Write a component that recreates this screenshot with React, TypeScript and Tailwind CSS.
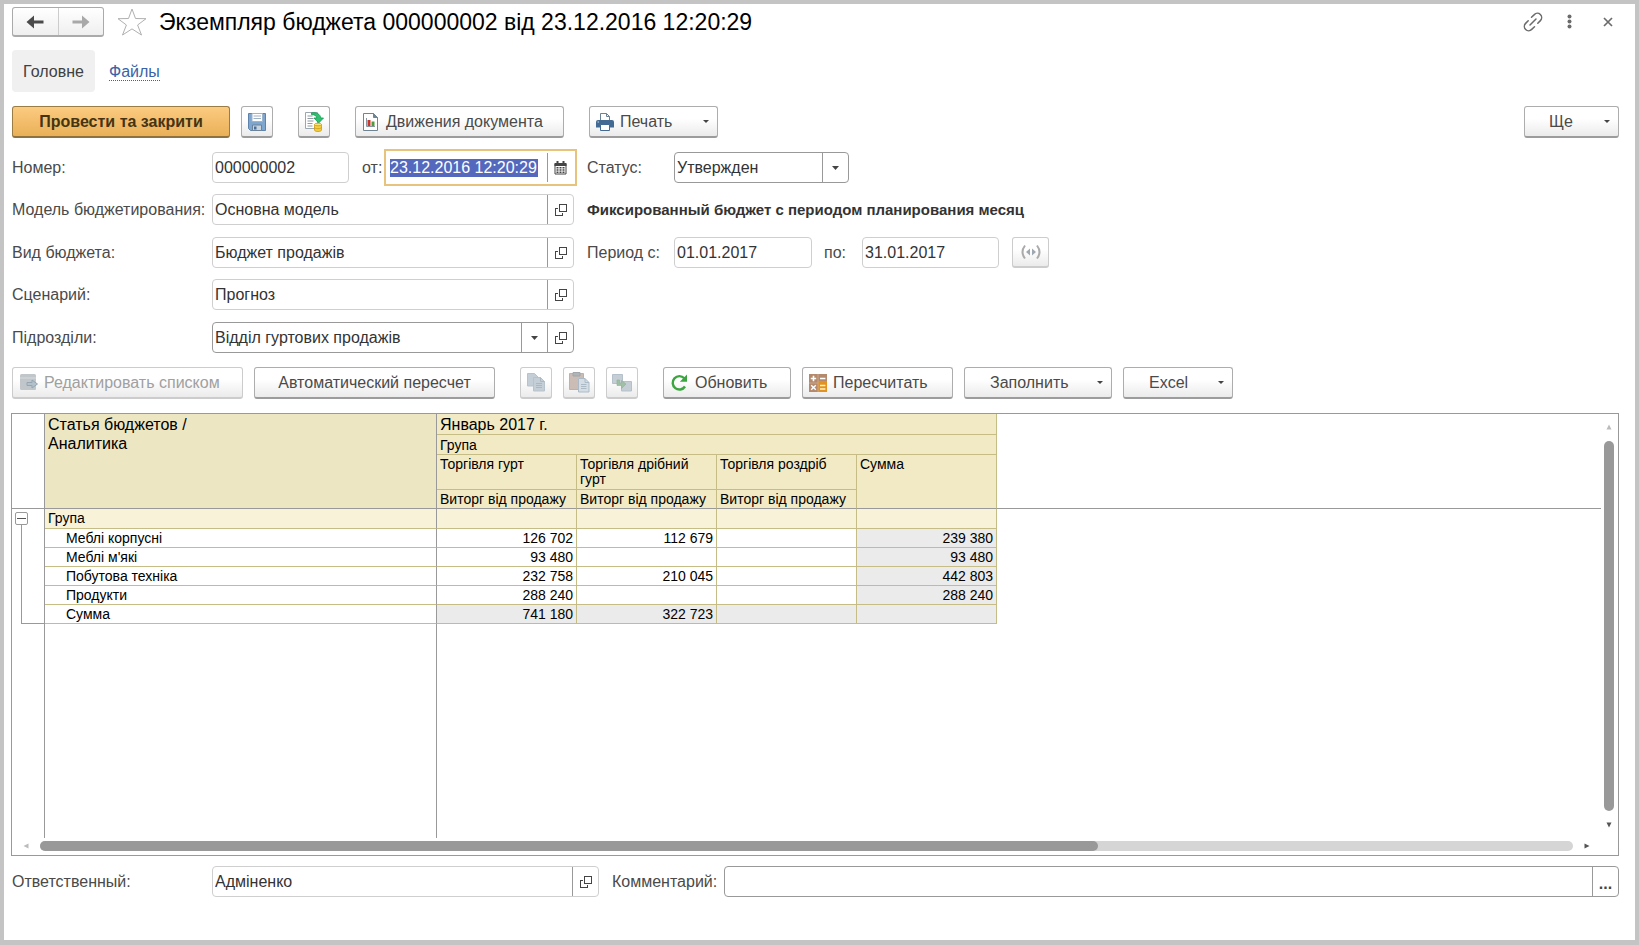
import type { ReactNode } from 'react';
import { clsx } from 'clsx';

type BudgetRow = {
  title: string;
  values: [string, string, string, string];
  total?: boolean;
};

const ROWS: BudgetRow[] = [
  { title: 'Меблі корпусні', values: ['126 702', '112 679', '', '239 380'] },
  { title: "Меблі м'які", values: ['93 480', '', '', '93 480'] },
  { title: 'Побутова техніка', values: ['232 758', '210 045', '', '442 803'] },
  { title: 'Продукти', values: ['288 240', '', '', '288 240'] },
  { title: 'Сумма', values: ['741 180', '322 723', '', ''], total: true },
];

const TRADE_GROUPS = ['Торгівля гурт', 'Торгівля дрібний гурт', 'Торгівля роздріб'];

export default function App() {
  return (
    <div className="flex min-h-screen flex-col border-4 border-b-[5px] border-[#c4c4c4] bg-white pr-4 pl-2 font-['Liberation_Sans',Arial,sans-serif] text-[16px] leading-5 text-[#4a4a4a]">
      <TitleBar />

      <nav className="mt-[13px] flex h-[42px] items-center gap-[14px]">
        <a
          href="#main"
          className="flex h-full w-[83px] items-center justify-center rounded bg-[#f0f0f0] pt-px text-[#404040]"
        >
          Головне
        </a>
        <a href="#files" className="border-b border-dotted border-[#3a62a8] pt-px leading-[17px] text-[#3a62a8]">
          Файлы
        </a>
      </nav>

      <div className="mt-[14px] flex h-8">
        <button
          type="button"
          className="w-[218px] rounded-[3px] border border-b-2 border-[#9c7c45] border-b-[#8f7140] bg-linear-to-b from-[#fccb80] to-[#e9b057] font-bold text-[#453414]"
        >
          Провести та закрити
        </button>
        <ToolButton label="Записать" className="ml-[11px] w-8">
          <FloppyIcon />
        </ToolButton>
        <ToolButton label="Провести" className="ml-[25px] w-8">
          <PostIcon />
        </ToolButton>
        <ToolButton className="ml-[25px] w-[209px] pl-[7px]" align="left">
          <ReportIcon />
          <span className="ml-2">Движения документа</span>
        </ToolButton>
        <ToolButton className="ml-[25px] w-[129px] pl-[6px]" align="left">
          <PrinterIcon />
          <span className="ml-[6px]">Печать</span>
          <Caret className="mr-2 ml-auto" />
        </ToolButton>
        <ToolButton className="ml-auto w-[95px] pl-6" align="left">
          <span>Ще</span>
          <Caret className="mr-2 ml-auto" />
        </ToolButton>
      </div>

      <DocumentForm />

      <div className="mt-[14px] flex h-8">
        <ToolButton className="w-[231px] pl-[7px]" align="left" disabled>
          <EditListIcon />
          <span className="ml-[6px]">Редактировать списком</span>
        </ToolButton>
        <ToolButton className="ml-[11px] w-[241px]">Автоматический пересчет</ToolButton>
        <ToolButton label="Копировать" className="ml-[25px] w-8" disabled>
          <CopyIcon />
        </ToolButton>
        <ToolButton label="Вставить" className="ml-[11px] w-8" disabled>
          <PasteIcon />
        </ToolButton>
        <ToolButton label="Заменить" className="ml-[11px] w-8" disabled>
          <SwapIcon />
        </ToolButton>
        <ToolButton className="ml-[25px] w-32 pl-[6px]" align="left">
          <RefreshIcon />
          <span className="ml-[6px]">Обновить</span>
        </ToolButton>
        <ToolButton className="ml-[11px] w-[151px] pl-[6px]" align="left">
          <CalculatorIcon />
          <span className="ml-[6px]">Пересчитать</span>
        </ToolButton>
        <ToolButton className="ml-[11px] w-[148px] pl-[25px]" align="left">
          <span>Заполнить</span>
          <Caret className="mr-2 ml-auto" />
        </ToolButton>
        <ToolButton className="ml-[11px] w-[110px] pl-[25px]" align="left">
          <span>Excel</span>
          <Caret className="mr-2 ml-auto" />
        </ToolButton>
      </div>

      <BudgetSheet />

      <footer className="mt-[10px] mb-[43px] flex h-[31px] items-center">
        <label htmlFor="responsible" className="w-[200px]">
          Ответственный:
        </label>
        <Field id="responsible" value="Адміненко" className="w-[387px]" muted>
          <FieldButton label="Открыть">
            <OpenIcon />
          </FieldButton>
        </Field>
        <label htmlFor="comment" className="ml-[13px] w-28">
          Комментарий:
        </label>
        <Field id="comment" value="" className="flex-1">
          <FieldButton label="Редактировать комментарий">
            <span className="mt-1 font-bold">...</span>
          </FieldButton>
        </Field>
      </footer>
    </div>
  );
}

// ── Title ────────────────────────────────────────────────────────────────────

function TitleBar() {
  return (
    <header className="mt-[3px] flex h-[30px] items-center">
      <div className="flex h-full w-[92px] rounded-[3px] border border-b-2 border-[#aaaaaa] bg-linear-to-b from-white to-[#efefef]">
        <button type="button" aria-label="Назад" className="flex flex-1 items-center justify-center border-r border-[#cccccc]">
          <ArrowIcon className="text-[#4a4a4a]" />
        </button>
        <button type="button" aria-label="Вперед" className="flex flex-1 items-center justify-center">
          <ArrowIcon className="rotate-180 text-[#a8a8a8]" />
        </button>
      </div>
      <button type="button" aria-label="В избранное" className="ml-[13px]">
        <StarIcon />
      </button>
      <h1 className="ml-[12px] text-[23px] leading-7 text-black">
        Экземпляр бюджета 000000002 від 23.12.2016 12:20:29
      </h1>
      <div className="ml-auto flex items-center pb-px">
        <button type="button" aria-label="Получить ссылку">
          <LinkIcon />
        </button>
        <button type="button" aria-label="Меню" className="ml-6">
          <DotsIcon />
        </button>
        <button type="button" aria-label="Закрыть" className="mr-[6px] ml-[31px]">
          <CloseIcon />
        </button>
      </div>
    </header>
  );
}

// ── Form ─────────────────────────────────────────────────────────────────────

function DocumentForm() {
  return (
    <div className="mt-[14px] flex gap-[13px]">
      <div className="flex w-[562px] flex-col gap-[11px]">
        <div className="flex h-[31px] items-center">
          <label htmlFor="number" className="w-[200px]">
            Номер:
          </label>
          <Field id="number" value="000000002" className="w-[137px]" muted />
          <label htmlFor="date" className="ml-[13px] w-[22px]">
            от:
          </label>
          <div className="-mr-[3px] flex h-[37px] flex-1 items-center border-2 border-[#e8c37d] bg-white pl-1">
            <input
              id="date"
              defaultValue="23.12.2016 12:20:29"
              className="h-[18px] w-[148px] bg-[#5469bd] text-white outline-none"
            />
            <button
              type="button"
              aria-label="Выбрать дату"
              className="ml-auto flex h-[29px] w-[28px] items-center border-l border-[#999999] pl-[6px]"
            >
              <CalendarIcon />
            </button>
          </div>
        </div>
        <FormRow id="model" label="Модель бюджетирования:" value="Основна модель" />
        <FormRow id="kind" label="Вид бюджета:" value="Бюджет продажів" className="mt-px" />
        <FormRow id="scenario" label="Сценарий:" value="Прогноз" />
        <div className="mt-px flex h-[31px] items-center">
          <label htmlFor="department" className="w-[200px]">
            Підрозділи:
          </label>
          <Field id="department" value="Відділ гуртових продажів" className="flex-1">
            <FieldButton label="Выбрать">
              <DropIcon />
            </FieldButton>
            <FieldButton label="Открыть">
              <OpenIcon />
            </FieldButton>
          </Field>
        </div>
      </div>

      <div className="flex flex-col gap-[11px]">
        <div className="flex h-[31px] items-center">
          <label htmlFor="status" className="w-[87px]">
            Статус:
          </label>
          <div className="relative h-full w-[175px] rounded-[4px] border border-[#999999]">
            <select id="status" className="h-full w-full appearance-none bg-transparent pl-[2px] text-[#333333] outline-none">
              <option>Утвержден</option>
            </select>
            <span className="pointer-events-none absolute inset-y-0 right-0 flex w-[26px] items-center justify-center border-l border-[#999999]">
              <DropIcon />
            </span>
          </div>
        </div>
        <p className="flex h-[31px] items-center text-[15px] font-bold text-[#333333]">
          Фиксированный бюджет с периодом планирования месяц
        </p>
        <div className="mt-px flex h-[31px] items-center">
          <label htmlFor="from" className="w-[87px]">
            Период с:
          </label>
          <Field id="from" value="01.01.2017" className="w-[138px]" muted />
          <label htmlFor="to" className="ml-3 w-[38px]">
            по:
          </label>
          <Field id="to" value="31.01.2017" className="w-[137px]" muted />
          <ToolButton label="Выбрать период" className="ml-[13px] h-full w-[37px]" disabled>
            <PeriodIcon />
          </ToolButton>
        </div>
      </div>
    </div>
  );
}

function FormRow({
  id,
  label,
  value,
  className,
}: {
  id: string;
  label: string;
  value: string;
  className?: string;
}) {
  return (
    <div className={clsx('flex h-[31px] items-center', className)}>
      <label htmlFor={id} className="w-[200px]">
        {label}
      </label>
      <Field id={id} value={value} className="flex-1" muted>
        <FieldButton label="Открыть">
          <OpenIcon />
        </FieldButton>
      </Field>
    </div>
  );
}

function Field({
  id,
  value,
  className,
  muted,
  children,
}: {
  id: string;
  value: string;
  className?: string;
  muted?: boolean;
  children?: ReactNode;
}) {
  return (
    <div
      className={clsx(
        'flex h-full items-stretch rounded-[4px] border bg-white',
        muted ? 'border-[#cfcfcf]' : 'border-[#999999]',
        className,
      )}
    >
      <input id={id} defaultValue={value} className="min-w-0 flex-1 bg-transparent pl-[2px] text-[#333333] outline-none" />
      {children}
    </div>
  );
}

function FieldButton({ label, children }: { label: string; children: ReactNode }) {
  return (
    <button
      type="button"
      aria-label={label}
      className="flex w-[26px] items-center justify-center border-l border-[#999999] text-[#444444]"
    >
      {children}
    </button>
  );
}

function ToolButton({
  label,
  className,
  align,
  disabled,
  children,
}: {
  label?: string;
  className?: string;
  align?: 'left';
  disabled?: boolean;
  children: ReactNode;
}) {
  return (
    <button
      type="button"
      aria-label={label}
      disabled={disabled}
      className={clsx(
        'flex items-center rounded-[3px] border border-b-2 bg-linear-to-b from-white from-40% to-[#ebebeb]',
        align === 'left' ? 'justify-start' : 'justify-center',
        disabled ? 'border-[#cccccc] text-[#a0a0a0]' : 'border-[#adadad] border-b-[#9c9c9c]',
        className,
      )}
    >
      {children}
    </button>
  );
}

// ── Sheet ────────────────────────────────────────────────────────────────────

function BudgetSheet() {
  const head = 'border-r border-b border-[#c6bd86] bg-[#f2eac5] px-[3px] text-left align-top font-normal';

  return (
    <div className="mt-[14px] -ml-px flex flex-1 flex-col border border-[#999999] text-[14px] leading-[15px] text-black">
      <div className="flex flex-1">
        <div className="flex min-w-0 flex-1 flex-col">
          <table className="w-full table-fixed border-separate border-spacing-0">
            <colgroup>
              <col className="w-[33px]" />
              <col className="w-[392px]" />
              <col className="w-[140px]" />
              <col className="w-[140px]" />
              <col className="w-[140px]" />
              <col className="w-[140px]" />
              <col />
            </colgroup>
            <thead>
              <tr className="h-[21px]">
                <td rowSpan={4} className="border-r border-b border-[#999999]" />
                <th
                  rowSpan={4}
                  className="border-r border-b border-[#999999] bg-[#ede6c3] px-[3px] pt-px text-left align-top text-[16px] leading-[19px] font-normal"
                >
                  Статья бюджетов /
                  <br />
                  Аналитика
                </th>
                <th colSpan={4} className={clsx(head, 'pt-px text-[16px] leading-[19px]')}>
                  Январь 2017 г.
                </th>
                <td rowSpan={4} className="border-b border-[#999999]" />
              </tr>
              <tr className="h-5">
                <th colSpan={4} className={clsx(head, 'pt-[3px]')}>
                  Група
                </th>
              </tr>
              <tr className="h-[35px]">
                {TRADE_GROUPS.map((name) => (
                  <th key={name} className={clsx(head, 'pt-[2px]')}>
                    {name}
                  </th>
                ))}
                <th rowSpan={2} className={clsx(head, 'border-b-[#999999] pt-[2px]')}>
                  Сумма
                </th>
              </tr>
              <tr className="h-[19px]">
                {TRADE_GROUPS.map((name) => (
                  <th key={name} className={clsx(head, 'border-b-[#999999] pt-[2px]')}>
                    Виторг від продажу
                  </th>
                ))}
              </tr>
            </thead>
            <tbody>
              <tr className="h-5">
                <td rowSpan={6} className="h-px border-r border-[#999999] p-0">
                  <TreeToggle />
                </td>
                <td className="border-r border-b border-[#c6bd86] border-r-[#999999] bg-[#f8f2d9] px-[3px]">Група</td>
                {[0, 1, 2, 3].map((i) => (
                  <td key={i} className="border-r border-b border-[#c6bd86] bg-[#f8f2d9]" />
                ))}
                <td />
              </tr>
              {ROWS.map((row) => (
                <tr key={row.title} className="h-[19px]">
                  <td className="border-r border-b border-[#c6bd86] border-r-[#999999] pr-[3px] pl-[21px]">{row.title}</td>
                  {row.values.map((value, i) => (
                    <td
                      key={i}
                      className={clsx(
                        'border-r border-b border-[#c6bd86] px-[3px] text-right',
                        (row.total || i === 3) && 'bg-[#ebebeb]',
                      )}
                    >
                      {value}
                    </td>
                  ))}
                  <td />
                </tr>
              ))}
            </tbody>
          </table>
          {/* column rules run on below the last row */}
          <div className="flex flex-1">
            <div className="w-[33px] border-r border-[#999999]" />
            <div className="w-[392px] border-r border-[#999999]" />
          </div>
        </div>

        <div className="flex w-[17px] flex-col items-center pt-[10px] pr-[2px] pb-[10px]">
          <Triangle className="-rotate-90 text-[#bbbbbb]" />
          <div className="my-[11px] w-[10px] flex-1 rounded-full bg-[#999999]" />
          <Triangle className="rotate-90 text-[#555555]" />
        </div>
      </div>

      <div className="flex h-[17px] items-center pr-7 pb-px pl-[11px]">
        <Triangle className="rotate-180 text-[#bbbbbb]" />
        <div className="mx-[11px] h-[10px] flex-1 rounded-full bg-[#d5d5d5]">
          <div className="h-full w-[69%] rounded-full bg-[#999999]" />
        </div>
        <Triangle className="text-[#555555]" />
      </div>
    </div>
  );
}

function TreeToggle() {
  return (
    <div className="flex h-full flex-col pt-[3px] pl-[3px]">
      <button
        type="button"
        aria-label="Свернуть"
        className="flex size-[13px] shrink-0 items-center justify-center rounded-[2px] border border-[#999999] bg-white"
      >
        <span className="h-px w-[9px] bg-[#555555]" />
      </button>
      <div className="ml-[6px] flex-1 border-b border-l border-[#999999]" />
    </div>
  );
}

// ── Icons ────────────────────────────────────────────────────────────────────

function Triangle({ className }: { className?: string }) {
  return (
    <svg width="6" height="6" viewBox="0 0 6 6" fill="currentColor" className={clsx('shrink-0', className)} aria-hidden>
      <path d="M0.5 0.5 5.5 3 0.5 5.5z" />
    </svg>
  );
}

function Caret({ className }: { className?: string }) {
  return (
    <svg width="6" height="3" viewBox="0 0 6 3" fill="#444444" className={clsx('shrink-0', className)} aria-hidden>
      <path d="M0 0h6L3 3z" />
    </svg>
  );
}

function DropIcon() {
  return (
    <svg width="7" height="4" viewBox="0 0 7 4" fill="#444444" aria-hidden>
      <path d="M0 0h7L3.5 4z" />
    </svg>
  );
}

function ArrowIcon({ className }: { className?: string }) {
  return (
    <svg width="18" height="14" viewBox="0 0 18 14" fill="currentColor" className={className} aria-hidden>
      <path d="M0.5 7 8 0.5V5.5H17.5V8.5H8V13.5z" />
    </svg>
  );
}

function StarIcon() {
  return (
    <svg width="30" height="28" viewBox="0 0 30 28" fill="#ffffff" stroke="#b0b0b0" strokeWidth="1" aria-hidden>
      <path d="M15 1 18.5 10.5 29 10.7 20.6 17 24.5 27 15 20.9 5.5 27 9.4 17 1 10.7 11.5 10.5z" />
    </svg>
  );
}

function LinkIcon() {
  return (
    <svg
      width="20"
      height="20"
      viewBox="0 0 20 20"
      fill="none"
      stroke="#6b6b6b"
      strokeWidth="1.5"
      strokeLinecap="round"
      aria-hidden
    >
      <path d="M8.5 5.2 11.3 2.6a4.2 4.2 0 0 1 6.1 6L14.8 11.3" />
      <path d="M11.5 14.8 8.7 17.4a4.2 4.2 0 0 1-6.1-6L5.2 8.7" />
      <path d="M7 13 13 7" />
    </svg>
  );
}

function DotsIcon() {
  return (
    <svg width="5" height="15" viewBox="0 0 5 15" fill="#6b6b6b" aria-hidden>
      <circle cx="2.5" cy="2.5" r="2" />
      <circle cx="2.5" cy="7.5" r="2" />
      <circle cx="2.5" cy="12.5" r="2" />
    </svg>
  );
}

function CloseIcon() {
  return (
    <svg width="10" height="10" viewBox="0 0 10 10" stroke="#6b6b6b" strokeWidth="1.7" aria-hidden>
      <path d="M1 1 9 9M9 1 1 9" />
    </svg>
  );
}

function OpenIcon() {
  return (
    <svg width="12" height="12" viewBox="0 0 12 12" fill="none" stroke="#444444" shapeRendering="crispEdges" aria-hidden>
      <path d="M4.5 0.5h7v7h-7z" />
      <path d="M3 4.5H0.5v7h7V9" />
    </svg>
  );
}

function CalendarIcon() {
  return (
    <svg width="13" height="14" viewBox="0 0 13 14" aria-hidden>
      <path d="M1 3h11v10H1z" fill="#ffffff" stroke="#444444" />
      <path d="M0.5 2h12v3H0.5z" fill="#444444" />
      <path d="M3.5 0v3M9.5 0v3" stroke="#444444" strokeWidth="2" />
      <path
        d="M2.500 6h2v1.500h-2zM5.500 6h2v1.500h-2zM8.500 6h2v1.500h-2zM2.500 8.300h2v1.500h-2zM5.500 8.300h2v1.500h-2zM8.500 8.300h2v1.500h-2zM2.500 10.600h2v1.400h-2zM5.500 10.600h2v1.400h-2zM8.500 10.600h2v1.400h-2z"
        fill="#444444"
      />
    </svg>
  );
}

function PeriodIcon() {
  return (
    <svg width="20" height="16" viewBox="0 0 20 16" fill="none" aria-hidden>
      <path d="M4 1.5Q-1 8 4 14.5M16 1.5Q21 8 16 14.5" stroke="#aaaaaa" strokeWidth="2" />
      <path d="M9 4.5v7L5 8zM11 4.5v7L15 8z" fill="#9fa8b0" />
    </svg>
  );
}

function FloppyIcon() {
  return (
    <svg width="18" height="18" viewBox="0 0 18 18" aria-hidden>
      <path d="M0.5 0.5h17v17H2.5l-2-2z" fill="#7fa6cf" stroke="#5d83ad" />
      <path d="M4 0.5h10.5v8H4z" fill="#ffffff" stroke="#9db4cc" />
      <path d="M5.5 3h7.5M5.5 5.5h7.5" stroke="#9db0c4" />
      <path d="M4.5 12h9v5.5h-9z" fill="#c9d3dc" stroke="#6c8296" />
      <path d="M6 13.5h2.5v3H6z" fill="#466f9c" />
    </svg>
  );
}

function PostIcon() {
  return (
    <svg width="20" height="20" viewBox="0 0 20 20" aria-hidden>
      <path d="M1.5 0.5h12v16h-12z" fill="#ffffff" stroke="#9aa7b0" />
      <path d="M3.5 4h5M3.5 6.5h6M3.5 9h6M3.5 11.5h5M3.5 14h5" stroke="#8d9aa4" />
      <path
        d="M7.5 0.8c5-.6 8.7 1.2 9.3 5.2h2.7L14.7 11 10 6h2.8c-.3-2.2-2.3-3.5-5.3-3.3z"
        fill="#2fc071"
        stroke="#159a50"
        strokeWidth="0.8"
      />
      <path d="M10.5 12.5v5.5c0 2 7 2 7 0v-5.5" fill="#f4cf3e" stroke="#c99a1c" strokeWidth="0.8" />
      <ellipse cx="14" cy="12.5" rx="3.5" ry="1.3" fill="#fbe47c" stroke="#c99a1c" strokeWidth="0.8" />
      <path d="M10.5 15.3c0 1.8 7 1.8 7 0" fill="none" stroke="#c99a1c" strokeWidth="0.8" />
    </svg>
  );
}

function ReportIcon() {
  return (
    <svg width="15" height="18" viewBox="0 0 15 18" aria-hidden>
      <path d="M0.5 0.5h10l4 4v13h-14z" fill="#ffffff" stroke="#6f8593" />
      <path d="M10.5 0.5v4h4z" fill="#6f8593" stroke="#6f8593" />
      <path d="M3.5 5v8.5H12" fill="none" stroke="#8796a1" />
      <path d="M4.500 7h3v6h-3z" fill="#c9362d" />
      <path d="M8.5 8.5h3V13h-3z" fill="#4f9a3d" />
    </svg>
  );
}

function PrinterIcon() {
  return (
    <svg width="18" height="18" viewBox="0 0 18 18" aria-hidden>
      <path d="M4.5 8V0.5h6l3 3V8z" fill="#ffffff" stroke="#6c8193" />
      <path d="M10.5 0.5v3h3" fill="none" stroke="#6c8193" />
      <path d="M2 7h14q2 0 2 2v5.5H0V9q0-2 2-2z" fill="#426a92" />
      <path d="M1.5 9h1.5" stroke="#c8d8e8" />
      <path d="M4.5 11.5h9v6h-9z" fill="#ffffff" stroke="#426a92" />
    </svg>
  );
}

function EditListIcon() {
  return (
    <svg width="18" height="17" viewBox="0 0 18 17" aria-hidden>
      <path d="M1.5 0h13q1.5 0 1.5 1.5V15q0 1-1 1H1.5Q0 16 0 14.5v-13Q0 0 1.5 0z" fill="#c0c6ca" />
      <path d="M0 4h16" stroke="#d8dcdf" />
      <path d="M7 8.5h5V6l5.5 4-5.5 4v-2.5H7z" fill="#b2c1cc" stroke="#95a5b1" />
    </svg>
  );
}

function CopyIcon() {
  return (
    <svg width="19" height="19" viewBox="0 0 19 19" fill="#c3ced6" stroke="#b7c3cc" aria-hidden>
      <path d="M0.5 0.5h7l3.5 3.5v9H0.5z" />
      <path d="M6.5 4.5h7l4 4v9.5h-11z" />
      <path d="M13.5 4.5v4h4M9 10.5h6M9 12.5h6M9 14.5h6" fill="none" stroke="#a9b8c3" />
    </svg>
  );
}

function PasteIcon() {
  return (
    <svg width="21" height="21" viewBox="0 0 21 21" aria-hidden>
      <path d="M0.5 1.5h14v16h-14z" fill="#cbbdb5" stroke="#bfb0a8" />
      <path d="M4 0.5h7V4H4z" fill="#aeb4b8" stroke="#a0a6aa" />
      <path d="M9.5 6.5h6.5l4 4v9.5H9.5z" fill="#d5dee5" stroke="#abbac6" />
      <path d="M16 6.5v4h4M12 12.5h5.5M12 14.5h5.5M12 16.5h5.5" fill="none" stroke="#abbac6" />
    </svg>
  );
}

function SwapIcon() {
  return (
    <svg width="20" height="18" viewBox="0 0 20 18" aria-hidden>
      <path d="M0.5 0.5h10v9h-10z" fill="#c5ced5" stroke="#b5c1ca" />
      <path d="M9.5 7.5h10v9.5h-10z" fill="#c5ced5" stroke="#b5c1ca" />
      <path d="M5 6v5.5h4.5v3L14 10 9.5 6.5v2.5H7.5V6z" fill="#9fc0a4" stroke="#8fb295" strokeWidth="0.6" />
    </svg>
  );
}

function RefreshIcon() {
  return (
    <svg width="19" height="18" viewBox="0 0 19 18" aria-hidden>
      <path d="M14.3 4.3A6.7 6.7 0 1 0 15 12.5" fill="none" stroke="#3ba53f" strokeWidth="2.4" />
      <path d="M17 0.5v7.2H9.8z" fill="#3ba53f" />
    </svg>
  );
}

function CalculatorIcon() {
  return (
    <svg width="18" height="18" viewBox="0 0 18 18" aria-hidden>
      <path d="M0 0h18v18H0z" fill="#b58a6c" />
      <path d="M9 7h9v11H9z" fill="#e2921f" />
      <path d="M9 0v18M0 9h9" stroke="#c7a78f" />
      <path d="M4.5 1.8v5.4M1.8 4.5h5.4M11 4.5h5.4" stroke="#ffffff" strokeWidth="1.6" />
      <path d="M2.2 11.2l4.6 4.6M6.8 11.2l-4.6 4.6" stroke="#ffffff" strokeWidth="1.4" />
      <path d="M11 11.5h5.4M11 15h5.4" stroke="#fff3c4" strokeWidth="1.6" />
    </svg>
  );
}
